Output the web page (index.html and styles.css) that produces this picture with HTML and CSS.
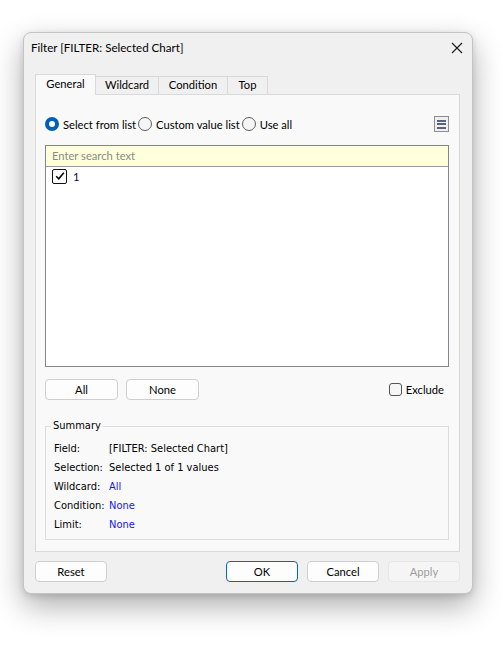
FILE: index.html
```html
<!DOCTYPE html>
<html>
<head>
<meta charset="utf-8">
<link rel="stylesheet" href="styles.css">
</head>
<body>
<div class="window">
  <div class="titlebar">
    <span class="title">Filter [FILTER: Selected Chart]</span>
    <svg class="close" width="12" height="12" viewBox="0 0 12 12"><path d="M1 1 L11 11 M11 1 L1 11" stroke="#1a1a1a" stroke-width="1.1" fill="none"/></svg>
  </div>
  <div class="content">
    <div class="tabs">
      <div class="tab active">General</div>
      <div class="tab">Wildcard</div>
      <div class="tab">Condition</div>
      <div class="tab">Top</div>
    </div>
    <div class="pane">
      <div class="mode-row">
        <label class="radio checked"><span class="dot"></span>Select from list</label>
        <label class="radio"><span class="dot"></span>Custom value list</label>
        <label class="radio"><span class="dot"></span>Use all</label>
        <span class="menu-btn"><i></i><i></i><i></i></span>
      </div>
      <div class="listbox">
        <div class="search">Enter search text</div>
        <div class="item">
          <span class="check"><svg width="12" height="12" viewBox="0 0 12 12"><path d="M2.2 6.2 L4.8 8.8 L9.8 2.8" stroke="#000" stroke-width="1.6" fill="none"/></svg></span>
          <span class="item-label">1</span>
        </div>
      </div>
      <div class="action-row">
        <button class="btn">All</button>
        <button class="btn">None</button>
        <label class="exclude"><span class="box"></span>Exclude</label>
      </div>
      <fieldset class="summary">
        <legend>Summary</legend>
        <div class="grid">
          <span class="k">Field:</span><span class="v">[FILTER: Selected Chart]</span>
          <span class="k">Selection:</span><span class="v">Selected 1 of 1 values</span>
          <span class="k">Wildcard:</span><span class="v link">All</span>
          <span class="k">Condition:</span><span class="v link">None</span>
          <span class="k">Limit:</span><span class="v link">None</span>
        </div>
      </fieldset>
    </div>
    <div class="footer">
      <button class="btn">Reset</button>
      <div class="right">
        <button class="btn primary">OK</button>
        <button class="btn">Cancel</button>
        <button class="btn disabled">Apply</button>
      </div>
    </div>
  </div>
</div>
</body>
</html>
```
FILE: styles.css
```css
* { box-sizing: border-box; }
html, body { margin: 0; padding: 0; background: #ffffff; }
body {
  font-family: Lato, "Noto Sans", sans-serif;
  font-size: 11.2px;
  color: #000;
  padding: 32px 0 0 23px;
  height: 646px;
  overflow: hidden;
}
.window {
  width: 450px;
  height: 562px;
  background: #f0f0f0;
  border: 1px solid #c4c4c4;
  border-radius: 8px;
  box-shadow: 0 12px 30px rgba(0,0,0,0.32), 0 2px 6px rgba(0,0,0,0.12);
  display: flex;
  flex-direction: column;
}
.titlebar {
  height: 29px;
  display: flex;
  align-items: center;
  justify-content: space-between;
  padding: 0 9px 0 7px;
}
.title { line-height: 16px; font-size: 11.6px; }
.close { display: block; }
.content {
  padding: 12px 12px 0 11px;
  display: flex;
  flex-direction: column;
}
.tabs {
  display: flex;
  align-items: flex-end;
  height: 20px;
  position: relative;
  z-index: 1;
}
.tab {
  height: 18px;
  line-height: 16px;
  padding: 0;
  border: 1px solid #d9d9d9;
  border-bottom: none;
  background: #f0f0f0;
  margin-left: -1px;
  text-align: center;
}
.tab:first-child { margin-left: 0; }
.tab:nth-child(1) { width: 61px; }
.tab:nth-child(2) { width: 64px; }
.tab:nth-child(3) { width: 70px; }
.tab:nth-child(4) { width: 41px; }
.tab.active {
  height: 21px;
  line-height: 18px;
  background: #f9f9f9;
  margin-bottom: -1px;
}
.pane {
  height: 458px;
  background: #f9f9f9;
  border: 1px solid #d9d9d9;
  padding: 21px 10px 0 9px;
  display: flex;
  flex-direction: column;
}
.mode-row {
  display: flex;
  align-items: center;
  height: 16px;
}
.radio {
  display: flex;
  align-items: center;
  margin-right: 2px;
}
.radio .dot {
  width: 14px;
  height: 14px;
  border-radius: 50%;
  border: 1px solid #5d5d5d;
  background: #f6f6f6;
  margin-right: 4px;
}
.radio.checked .dot {
  border: 4px solid #005fb8;
  background: #ffffff;
}
.menu-btn {
  margin-left: auto;
  width: 15px;
  height: 16px;
  border: 1.5px solid #8e8e8e;
  background: #f0f0f0;
  display: flex;
  flex-direction: column;
  align-items: center;
  justify-content: center;
  gap: 1.5px;
}
.menu-btn i {
  display: block;
  width: 9px;
  height: 2px;
  background: #56657a;
}
.listbox {
  margin-top: 13px;
  height: 222px;
  border: 1px solid #858590;
  background: #ffffff;
}
.search {
  height: 21px;
  background: #ffffdc;
  border-bottom: 1px solid #9a9aa2;
  color: #8a8a8a;
  line-height: 19px;
  padding-left: 6px;
}
.item {
  display: flex;
  align-items: center;
  height: 16px;
  margin-top: 1px;
  padding-left: 6px;
}
.check {
  width: 15px;
  height: 15px;
  border: 1.5px solid #111;
  border-radius: 2px;
  display: flex;
  align-items: center;
  justify-content: center;
  background: #fff;
}
.item-label { margin-left: 6px; color: #0a0a50; }
.action-row {
  margin-top: 12px;
  display: flex;
  align-items: center;
  gap: 8px;
}
.btn {
  font-family: inherit;
  font-size: 11.2px;
  width: 73px;
  height: 21px;
  padding: 0;
  border: 1px solid #cfcfcf;
  border-radius: 4px;
  background: #fdfdfd;
  color: #000;
  line-height: 19px;
}
.exclude {
  margin-left: auto;
  margin-right: 5px;
  display: flex;
  align-items: center;
}
.exclude .box {
  width: 13px;
  height: 13px;
  border: 1px solid #555;
  border-radius: 3px;
  background: #f6f6f6;
  margin-right: 4px;
}
.summary {
  margin: 18px 0 0 0;
  border: 1px solid #dcdcdc;
  padding: 0 8px 5px 5px;
  min-width: 0;
  font-family: "DejaVu Sans Condensed", "DejaVu Sans", sans-serif;
  font-size: 11px;
}
.summary legend {
  padding: 0 2px;
  line-height: 16px;
}
.grid {
  margin: 5px 0 0 3px;
  display: grid;
  grid-template-columns: 55px auto;
  grid-auto-rows: 19px;
  align-items: center;
}
.k { white-space: nowrap; }
.link { color: #1616f0; }
.footer {
  margin-top: 9px;
  display: flex;
  justify-content: space-between;
}
.footer .btn { width: 72px; }
.footer .right { display: flex; gap: 9px; }
.btn.primary { border-color: #0067c0; }
.btn.disabled { background: #f5f5f5; border-color: #e6e6e6; color: #9d9d9d; }
```
